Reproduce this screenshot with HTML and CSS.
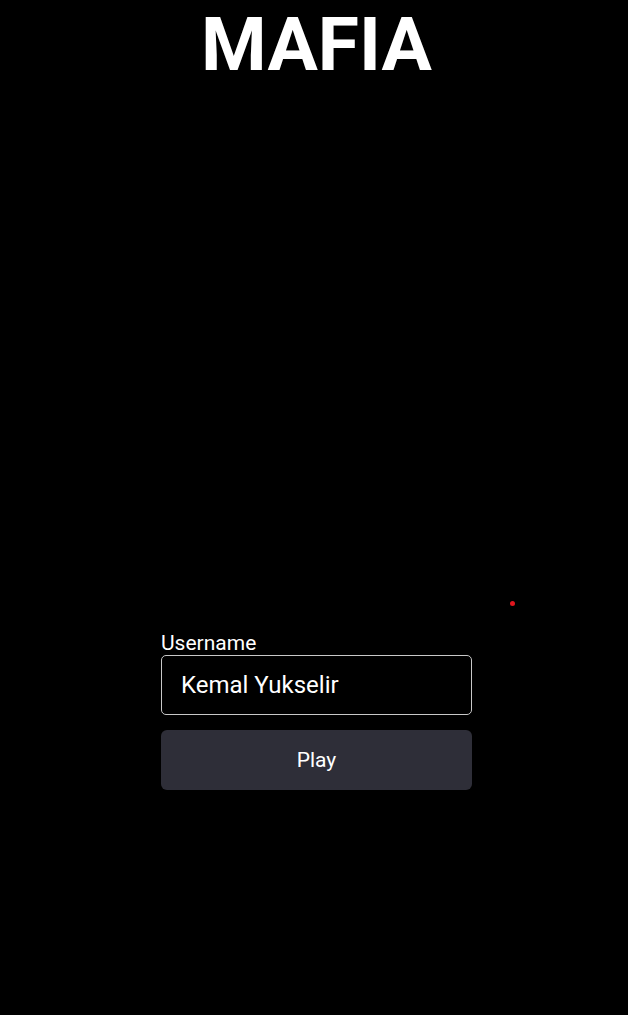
FILE: index.html
```html
<!DOCTYPE html>
<html>
<head>
<meta charset="utf-8">
<link rel="stylesheet" href="styles.css">
</head>
<body>
<div class="page">
  <h1 class="title">MAFIA</h1>
  <form class="login">
    <label class="label" for="username">Username</label>
    <input class="input" id="username" type="text" value="Kemal Yukselir">
    <button class="play" type="button">Play</button>
  </form>
  <span class="dot"></span>
</div>
</body>
</html>
```
FILE: styles.css
```css
html, body {
  margin: 0;
  padding: 0;
  background: #000;
  height: 100%;
}
.page {
  position: relative;
  box-sizing: border-box;
  min-height: 1015px;
  padding-left: 5px;
  display: flex;
  flex-direction: column;
  align-items: center;
  font-family: Roboto, "Liberation Sans", sans-serif;
  color: #fff;
}
.title {
  margin: 0;
  font-size: 75px;
  font-weight: 700;
  line-height: 88px;
  letter-spacing: 0;
}
.login {
  margin-top: 543px;
  width: 311px;
  display: flex;
  flex-direction: column;
}
.label {
  font-size: 21px;
  line-height: 24px;
}
.input {
  box-sizing: border-box;
  height: 60px;
  width: 100%;
  background: #000;
  border: 1px solid #c8c8c8;
  border-radius: 5px;
  color: #fff;
  font-family: Roboto, "Liberation Sans", sans-serif;
  font-size: 24px;
  padding: 0 19px;
  outline: none;
}
.play {
  margin-top: 15px;
  height: 60px;
  width: 100%;
  border: 0;
  border-radius: 6px;
  background: #2e2e38;
  color: #fff;
  font-family: Roboto, "Liberation Sans", sans-serif;
  font-size: 21px;
}
.dot {
  position: absolute;
  left: 510px;
  top: 601px;
  width: 5px;
  height: 5px;
  border-radius: 50%;
  background: #e0161e;
}
```
